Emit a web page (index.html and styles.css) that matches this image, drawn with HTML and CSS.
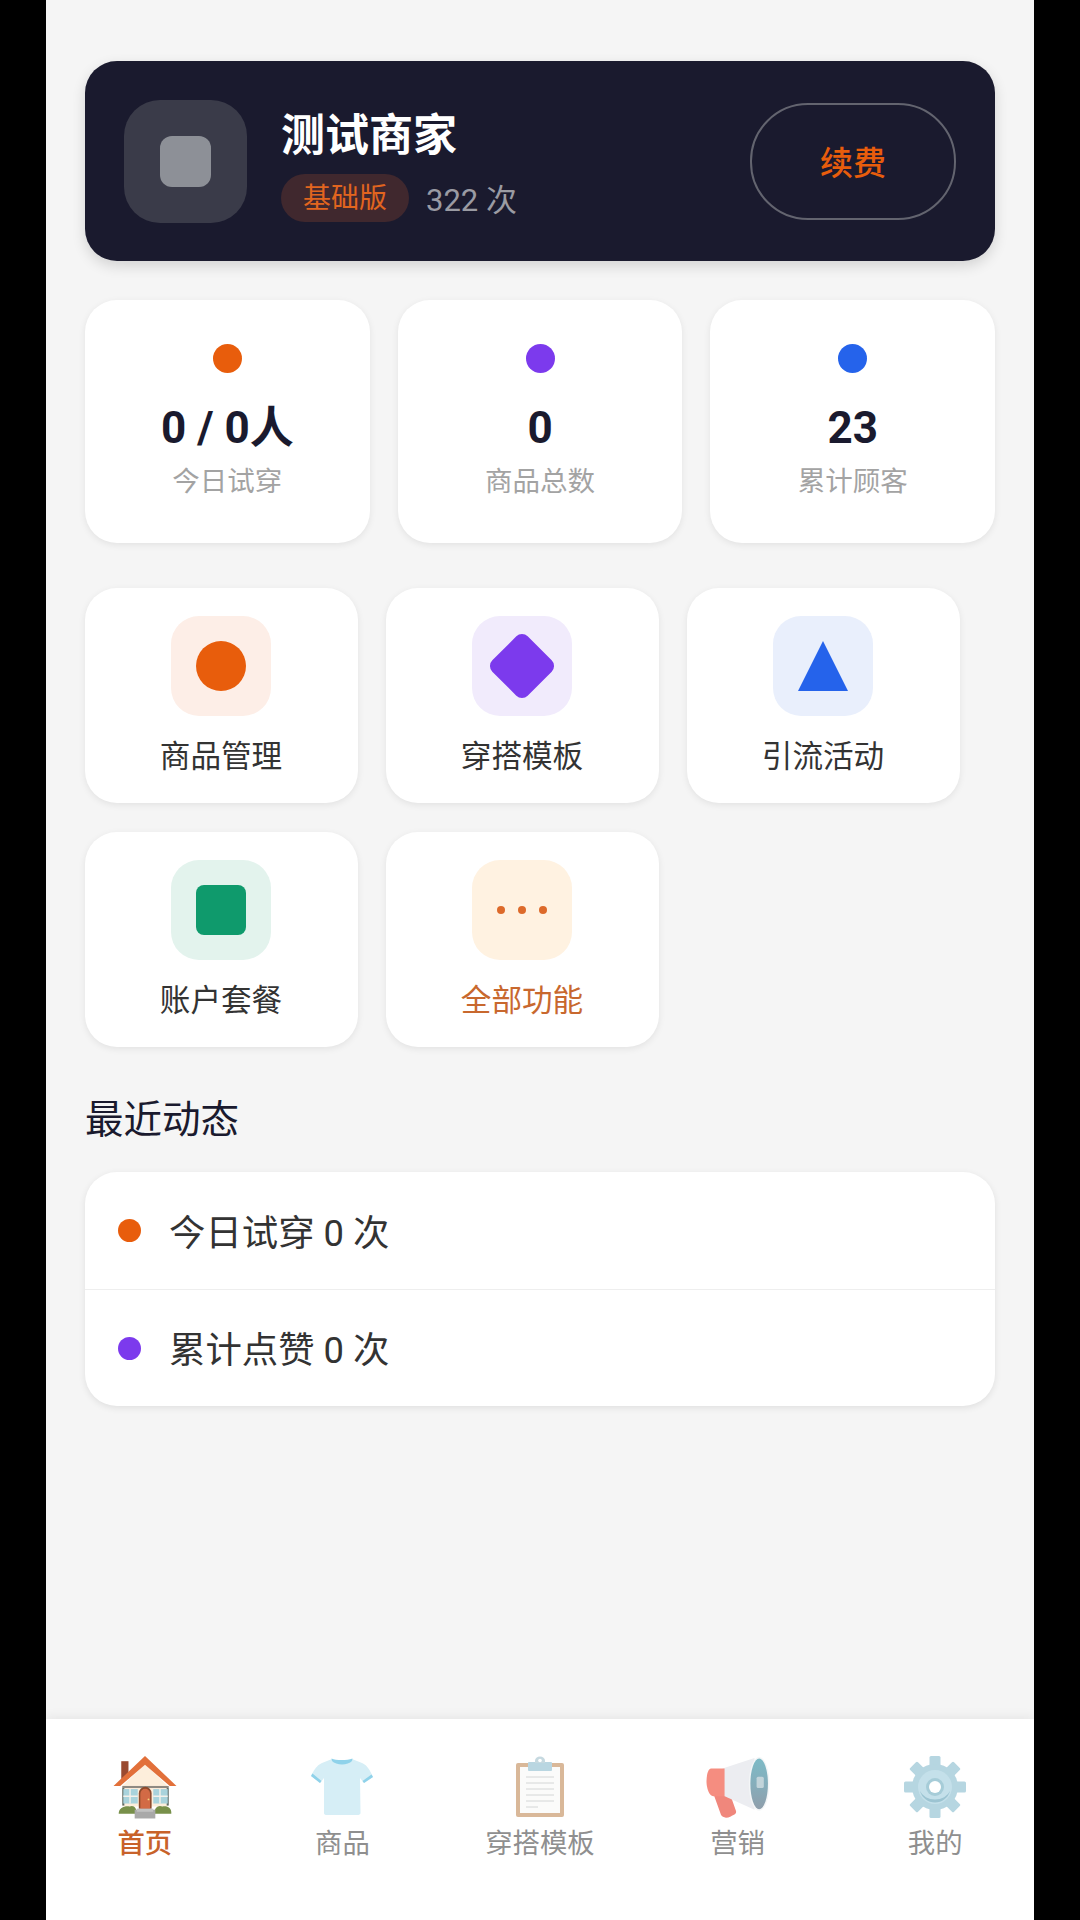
FILE: index.html
```html
<!DOCTYPE html>
<html lang="zh-CN">
<head>
    <meta charset="UTF-8">
    <meta name="viewport" content="width=device-width, initial-scale=1.0">
    <title>商家首页</title>
    <link rel="stylesheet" href="styles.css">
</head>
<body>
    <div class="phone">
        <main class="main">
            <section class="hero">
                <div class="avatar"><span class="avatar-mark"></span></div>
                <div class="hero-info">
                    <div class="hero-name">测试商家</div>
                    <div class="hero-plan">
                        <span class="plan-badge">基础版</span>
                        <span class="plan-count">322 次</span>
                    </div>
                </div>
                <button class="renew-btn">续费</button>
            </section>

            <section class="stats">
                <div class="stat-card">
                    <span class="stat-dot dot-orange"></span>
                    <div class="stat-value">0 / 0人</div>
                    <div class="stat-label">今日试穿</div>
                </div>
                <div class="stat-card">
                    <span class="stat-dot dot-purple"></span>
                    <div class="stat-value">0</div>
                    <div class="stat-label">商品总数</div>
                </div>
                <div class="stat-card">
                    <span class="stat-dot dot-blue"></span>
                    <div class="stat-value">23</div>
                    <div class="stat-label">累计顾客</div>
                </div>
            </section>

            <section class="actions">
                <div class="action-card">
                    <div class="action-icon bg-orange"><span class="shape-circle"></span></div>
                    <div class="action-label">商品管理</div>
                </div>
                <div class="action-card">
                    <div class="action-icon bg-purple"><span class="shape-diamond"></span></div>
                    <div class="action-label">穿搭模板</div>
                </div>
                <div class="action-card">
                    <div class="action-icon bg-blue"><span class="shape-triangle"></span></div>
                    <div class="action-label">引流活动</div>
                </div>
                <div class="action-card">
                    <div class="action-icon bg-green"><span class="shape-square"></span></div>
                    <div class="action-label">账户套餐</div>
                </div>
                <div class="action-card">
                    <div class="action-icon bg-cream">
                        <span class="shape-dots"><i></i><i></i><i></i></span>
                    </div>
                    <div class="action-label action-label-more">全部功能</div>
                </div>
            </section>

            <h2 class="section-title">最近动态</h2>
            <section class="feed">
                <div class="feed-row">
                    <span class="feed-dot dot-orange"></span>
                    <span class="feed-text">今日试穿 0 次</span>
                </div>
                <div class="feed-row">
                    <span class="feed-dot dot-purple"></span>
                    <span class="feed-text">累计点赞 0 次</span>
                </div>
            </section>
        </main>

        <nav class="tabbar">
            <div class="tab tab-active">
                <svg class="tab-icon" viewBox="0 0 62 62">
                    <rect x="8" y="6" width="7" height="17" fill="#9a4a30"/>
                    <path d="M9 30 L31 9 L53 30 V50 H9 Z" fill="#fdeedb"/>
                    <path d="M0.5 30 L31 1 L61.5 30 H55 L31 9.5 L7 30 Z" fill="#e2703a"/>
                    <rect x="9" y="30" width="45" height="2" fill="#8f8a82"/>
                    <rect x="9" y="32" width="2" height="17" fill="#5f6b66"/>
                    <rect x="52" y="32" width="2" height="17" fill="#5f6b66"/>
                    <rect x="10" y="33" width="14" height="14" fill="#a9d3dc"/>
                    <rect x="39" y="33" width="14" height="14" fill="#a9d3dc"/>
                    <path d="M16.5 33 V47 M10 40 H24 M45.5 33 V47 M39 40 H53" stroke="#f4f1ea" stroke-width="1.4"/>
                    <path d="M25 52 V37 a6.2 6.2 0 0 1 12.4 0 V52 Z" fill="#8c4a2c"/>
                    <path d="M26.5 52 V37.5 a4.7 4.7 0 0 1 9.4 0 V52 Z" fill="#d26a45"/>
                    <circle cx="34.4" cy="43" r="0.9" fill="#f3d27a"/>
                    <path d="M5.5 57 C5.5 51 12 49 16 50 C20 48 23 51 23 57 Z" fill="#78904a"/>
                    <path d="M40 57 C40 51 44 48 48 50 C52 49 57 51 56.5 57 Z" fill="#78904a"/>
                    <rect x="21" y="53" width="20" height="8.5" fill="#a9a9a9"/>
                    <rect x="23" y="52" width="16" height="3" fill="#c2c2c2"/>
                </svg>
                <span class="tab-label">首页</span>
            </div>
            <div class="tab">
                <svg class="tab-icon" viewBox="0 0 64 62">
                    <path d="M22 3 C26 5 37 5 42 3 L52 7 C57 9 60 14 63 21 L54 27 L50 22 L50.500 57 C50.500 58.500 49 59 47 59 H17 C15 59 14 58.500 14 57 L14 22 L10 27 L1 20 C4 14 7 9 12 7 Z" fill="#d6eef6"/>
                    <path d="M21.500 2.500 C26 4.500 37 4.500 42.500 2.500 L42 5 C38 9.500 26 9.500 22 5 Z" fill="#8fd2ea"/>
                    <path d="M1 20 L10 27 L11.500 25 L2.500 17.500 Z M63 21 L54 27 L52.500 25 L61.500 18.500 Z" fill="#8fd2ea"/>
                </svg>
                <span class="tab-label">商品</span>
            </div>
            <div class="tab">
                <svg class="tab-icon" viewBox="0 0 64 62">
                    <rect x="8" y="7" width="48" height="54" rx="2" fill="#d9b899"/>
                    <rect x="12" y="11" width="40" height="46" fill="#fbfbfa"/>
                    <path d="M18 21 H46 M18 27 H46 M18 33 H46 M18 39 H46 M18 45 H46 M18 51 H30" stroke="#d4d6d6" stroke-width="1"/>
                    <rect x="20" y="6" width="24" height="9" rx="1" fill="#b9d6e1"/>
                    <path d="M27 7 V4.500 a5 4 0 0 1 10 0 V7 Z" fill="#c6d9e0"/>
                    <circle cx="32" cy="4.500" r="1.800" fill="#fff"/>
                </svg>
                <span class="tab-label">穿搭模板</span>
            </div>
            <div class="tab">
                <svg class="tab-icon" viewBox="0 0 62 62">
                    <defs>
                        <linearGradient id="bellFill" x1="0" y1="0" x2="0" y2="1">
                            <stop offset="0" stop-color="#7dbac6"/>
                            <stop offset="0.5" stop-color="#86aebb"/>
                            <stop offset="1" stop-color="#8f9eab"/>
                        </linearGradient>
                    </defs>
                    <path d="M7 37 L23 37 L29 54 C30 57 27 58 24 59.500 C20 61.500 16 61 14.500 58 Z" fill="#f0877c"/>
                    <path d="M16 13 L47 3 L47 53 L16 39 Z" fill="#ecedf1"/>
                    <path d="M5 13 H18 V40 H7 C3 40 0.500 32 0.500 26 C0.500 19 2 13 5 13 Z" fill="#f58d80"/>
                    <ellipse cx="51.500" cy="28" rx="10" ry="26" fill="#f4f6f7"/>
                    <ellipse cx="51.500" cy="28" rx="8.500" ry="24.500" fill="url(#bellFill)"/>
                    <rect x="49" y="21" width="7" height="11" rx="1.500" fill="#c2d4da"/>
                </svg>
                <span class="tab-label">营销</span>
            </div>
            <div class="tab">
                <svg class="tab-icon" viewBox="0 0 64 64">
                    <g fill="#b6d6e1">
                        <rect x="26.500" y="1" width="11" height="62" rx="1.500"/>
                        <rect x="26.500" y="1" width="11" height="62" rx="1.500" transform="rotate(45 32 32)"/>
                        <rect x="26.500" y="1" width="11" height="62" rx="1.500" transform="rotate(90 32 32)"/>
                        <rect x="26.500" y="1" width="11" height="62" rx="1.500" transform="rotate(135 32 32)"/>
                        <circle cx="32" cy="32" r="23"/>
                    </g>
                    <circle cx="32" cy="32" r="17" fill="#c4e0ea"/>
                    <path d="M17 36 A15.500 15.500 0 0 0 47 36 A16 13 0 0 1 17 36 Z" fill="#9cc4d2"/>
                    <circle cx="32" cy="32" r="9" fill="#a6ccd8"/>
                    <circle cx="32" cy="32" r="6" fill="#fff"/>
                </svg>
                <span class="tab-label">我的</span>
            </div>
        </nav>
    </div>
</body>
</html>
```

FILE: styles.css
```css
* {
    box-sizing: border-box;
}

body {
    margin: 0;
    background-color: #000;
    font-family: Roboto, "Noto Sans CJK SC", sans-serif;
    color: #333;
}

.phone {
    width: 988px;
    height: 1920px;
    margin: 0 auto;
    background-color: #f5f5f5;
    display: flex;
    flex-direction: column;
}

.main {
    flex: 1;
    padding: 61px 39px 0;
}

/* merchant banner */
.hero {
    height: 200px;
    padding: 0 39px;
    display: flex;
    align-items: center;
    background-color: #1a1a2e;
    border-radius: 32px;
    box-shadow: 0 5px 14px rgba(0, 0, 0, 0.14);
}

.avatar {
    width: 123px;
    height: 123px;
    border-radius: 36px;
    background-color: #3a3b49;
    display: flex;
    align-items: center;
    justify-content: center;
}

.avatar-mark {
    width: 51px;
    height: 51px;
    border-radius: 12px;
    background-color: #8d9097;
}

.hero-info {
    margin-left: 34px;
    margin-top: 7px;
}

.hero-name {
    font-size: 44px;
    font-weight: 700;
    line-height: 56px;
    color: #fff;
}

.hero-plan {
    height: 48px;
    margin-top: 10px;
    display: flex;
    align-items: flex-start;
}

.plan-badge {
    width: 128px;
    height: 48px;
    border-radius: 24px;
    background-color: #40282e;
    color: #e2651f;
    font-size: 28px;
    line-height: 50px;
    text-align: center;
}

.plan-count {
    margin-left: 17px;
    font-size: 31px;
    line-height: 54px;
    color: #9a9ba3;
}

.renew-btn {
    width: 206px;
    height: 117px;
    margin-left: auto;
    border: 2.5px solid #63646f;
    border-radius: 58px;
    background: none;
    color: #e85d0c;
    font-family: inherit;
    font-size: 33px;
    font-weight: 500;
}

/* three counters */
.stats {
    margin-top: 39px;
    display: flex;
    gap: 28px;
}

.stat-card {
    flex: 1;
    height: 243px;
    padding-top: 44px;
    background-color: #fff;
    border-radius: 32px;
    box-shadow: 0 2px 7px rgba(0, 0, 0, 0.08);
    display: flex;
    flex-direction: column;
    align-items: center;
}

.stat-dot {
    width: 29px;
    height: 29px;
    border-radius: 50%;
}

.dot-orange {
    background-color: #e85d0c;
}

.dot-purple {
    background-color: #7c3aed;
}

.dot-blue {
    background-color: #2563eb;
}

.stat-value {
    margin-top: 27px;
    font-size: 44px;
    font-weight: 700;
    line-height: 56px;
    color: #1a1a2e;
}

.stat-label {
    margin-top: 7px;
    font-size: 27.5px;
    line-height: 38px;
    color: #a3a3a3;
}

/* shortcuts */
.actions {
    margin-top: 45px;
    display: grid;
    grid-template-columns: repeat(3, 273px);
    gap: 29px 28px;
}

.action-card {
    height: 215px;
    padding: 28px 1px 0 0;
    background-color: #fff;
    border-radius: 32px;
    box-shadow: 0 2px 7px rgba(0, 0, 0, 0.08);
    display: flex;
    flex-direction: column;
    align-items: center;
}

.action-icon {
    width: 100px;
    height: 100px;
    border-radius: 28px;
    display: flex;
    align-items: center;
    justify-content: center;
}

.bg-orange {
    background-color: #fdeee7;
}

.bg-purple {
    background-color: #f1ebfc;
}

.bg-blue {
    background-color: #e9effc;
}

.bg-green {
    background-color: #e3f3ed;
}

.bg-cream {
    background-color: #fff2e1;
}

.shape-circle {
    width: 50px;
    height: 50px;
    border-radius: 50%;
    background-color: #e85d0c;
}

.shape-diamond {
    width: 50px;
    height: 50px;
    border-radius: 8px;
    background-color: #7c3aed;
    transform: rotate(45deg);
}

.shape-triangle {
    width: 0;
    height: 0;
    border-left: 25px solid transparent;
    border-right: 25px solid transparent;
    border-bottom: 50px solid #2563eb;
}

.shape-square {
    width: 50px;
    height: 50px;
    border-radius: 8px;
    background-color: #0f9a6c;
}

.shape-dots {
    display: flex;
    gap: 13px;
}

.shape-dots i {
    width: 8px;
    height: 8px;
    border-radius: 50%;
    background-color: #dd6a2a;
}

.action-label {
    margin-top: 21px;
    font-size: 30.6px;
    line-height: 40px;
    color: #333;
}

.action-label-more {
    color: #c8682e;
}

/* recent activity */
.section-title {
    margin: 51px 0 30px;
    font-size: 38.5px;
    font-weight: 400;
    line-height: 44px;
    color: #1a1a2e;
}

.feed {
    background-color: #fff;
    border-radius: 32px;
    box-shadow: 0 2px 7px rgba(0, 0, 0, 0.09);
}

.feed-row {
    height: 117px;
    padding-left: 33px;
    display: flex;
    align-items: center;
}

.feed-row + .feed-row {
    border-top: 1px solid #eee;
}

.feed-dot {
    width: 23px;
    height: 23px;
    border-radius: 50%;
}

.feed-text {
    margin-left: 28px;
    margin-top: -2px;
    font-size: 36.4px;
    color: #333;
}

/* bottom tabs */
.tabbar {
    height: 201px;
    padding-top: 36px;
    display: flex;
    align-items: flex-start;
    background-color: #fff;
    box-shadow: 0 -3px 10px rgba(0, 0, 0, 0.06);
}

.tab {
    flex: 1;
    display: flex;
    flex-direction: column;
    align-items: center;
}

.tab-icon {
    width: 64px;
    height: 64px;
}

.tab-label {
    margin-top: 6px;
    font-size: 27.4px;
    line-height: 38px;
    color: #8f8f8f;
}

.tab-active .tab-label {
    color: #c8622a;
    font-weight: 500;
}
```
